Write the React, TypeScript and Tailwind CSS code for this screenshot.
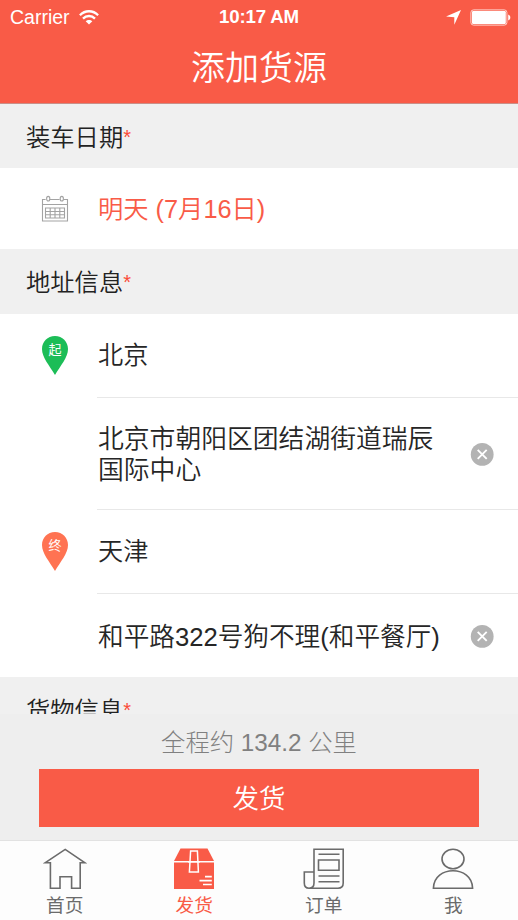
import type { ReactNode } from "react";

function StatusBar() {
  return (
    <div className="grid h-[34px] grid-cols-3 items-center pr-[7px] pl-[10px] text-white">
      <div className="flex items-center gap-[9px]">
        <span className="text-[19.5px] leading-[34px]">Carrier</span>
        <svg width="20" height="15" viewBox="0 0 20 15" fill="none" stroke="currentColor" strokeWidth="2.3">
          <path d="M0.9 5.3C6-0.1 14-0.1 19.1 5.3" />
          <path d="M4 8.6C7.4 5.1 12.6 5.1 16 8.6" />
          <path d="M6.7 11.3C8.6 9.4 11.4 9.4 13.3 11.3L10 14.6Z" fill="currentColor" stroke="none" />
        </svg>
      </div>
      <span className="-ml-[3px] text-center text-[18.7px] leading-[34px] font-bold tracking-[-0.2px] whitespace-nowrap">10:17 AM</span>
      <div className="flex items-center justify-end gap-[9px]">
        <svg width="15" height="15" viewBox="0 0 15 15" fill="currentColor">
          <path d="M15 0L8.3 14.8V7.2L0 6.6Z" />
        </svg>
        <svg width="41" height="17" viewBox="0 0 41 17" fill="none">
          <rect x="0.9" y="0.9" width="36" height="15.2" rx="2.6" stroke="#ffd3cb" strokeWidth="1" />
          <rect x="2" y="2" width="33.8" height="13" rx="1.2" fill="#fff" />
          <path d="M38.2 5.5C41 6.6 41 10.4 38.2 11.5Z" fill="#fff" />
        </svg>
      </div>
    </div>
  );
}

function SectionTitle({ children, className = "h-[65px]" }: { children: ReactNode; className?: string }) {
  return (
    <h2 className={`flex shrink-0 items-start overflow-hidden bg-[#f0f0f0] pl-[26px] text-[24.3px] leading-[67px] [font-weight:350] text-[#222] ${className}`}>
      <span>{children}</span>
      <span className="text-[20px] leading-[66px] text-[#fb4b38]">*</span>
    </h2>
  );
}

function Row({ icon, children, className }: { icon?: ReactNode; children: ReactNode; className: string }) {
  return (
    <div className="flex shrink-0 bg-white">
      <div className="flex w-[97px] justify-center pl-[13px]">{icon}</div>
      <div className={`flex flex-1 items-center pl-px [font-weight:350] text-[#262626] ${className}`}>{children}</div>
    </div>
  );
}

function Pin({ label, color }: { label: string; color: string }) {
  return (
    <svg className="mt-[21px]" width="28" height="41" viewBox="0 0 28 41">
      <path d="M14 1C6.5 1 1 6.8 1 14C1 22.5 8.5 30.5 14 40C19.5 30.5 27 22.5 27 14C27 6.8 21.5 1 14 1Z" fill={color} />
      <text x="14" y="19" textAnchor="middle" fontSize="13" fontWeight="400" fill="#fff">{label}</text>
    </svg>
  );
}

function Calendar() {
  return (
    <svg className="mt-[27px]" width="28" height="27" viewBox="0 0 28 27" fill="none" stroke="#a3a3a3" strokeWidth="1.1">
      <path d="M4.6 4.5H1.5V26H26.5V4.5H22.4M18.6 4.5H8.4M1.5 9.5H26.5" />
      <ellipse cx="7.2" cy="3.7" rx="1.6" ry="2.3" />
      <ellipse cx="20.8" cy="3.7" rx="1.6" ry="2.3" />
      <path d="M4.5 13V23H23.5V13ZM4.5 16.5H23.5M4.5 19.8H23.5M9.2 13V23M14 13V23M18.8 13V23" />
    </svg>
  );
}

function Clear() {
  return (
    <button aria-label="清除" className="mr-[24px] ml-auto shrink-0">
      <svg className="block" width="24" height="24" viewBox="0 0 24 24">
        <circle cx="12.2" cy="12.4" r="11.4" fill="#b3b3b3" />
        <path d="M7.7 7.9L16.7 16.9M16.7 7.9L7.7 16.9" stroke="#fff" strokeWidth="1.9" />
      </svg>
    </button>
  );
}

function Tab({ label, active, children }: { label: string; active?: boolean; children: ReactNode }) {
  return (
    <button className={`flex flex-1 flex-col items-center pt-[6px] ${active ? "text-[#f95b47]" : "text-[#6b6b6b]"}`}>
      <svg width="44" height="44" viewBox="0 0 44 44" fill="none" stroke="currentColor" strokeWidth="1.6">{children}</svg>
      <span className="mt-[2px] text-[18.7px] leading-[25px] font-normal">{label}</span>
    </button>
  );
}

export default function App() {
  return (
    <div className="flex h-[920px] w-[518px] flex-col overflow-hidden bg-[#f0f0f0] [font-family:'Liberation_Sans','Noto_Sans_CJK_SC',sans-serif]">
      <header className="h-[104px] shrink-0 border-b border-[#c98f88] bg-[#f95b47]">
        <StatusBar />
        <h1 className="text-center text-[34px] leading-[69px] [font-weight:350] text-white">添加货源</h1>
      </header>

      <main className="flex h-[610px] shrink-0 flex-col overflow-hidden">
        <SectionTitle className="h-[64px]">装车日期</SectionTitle>
        <Row icon={<Calendar />} className="h-[81px]">
          <span className="pt-[2px] text-[25.3px] text-[#f95b47]">明天 (7月16日)</span>
        </Row>
        <SectionTitle>地址信息</SectionTitle>
        <Row icon={<Pin label="起" color="#1cbd57" />} className="h-[84px] border-b border-[#e8e8e8]">
          <span className="text-[25.2px]">北京</span>
        </Row>
        <Row className="h-[112px] border-b border-[#e8e8e8]">
          <p className="w-[350px] pt-[3px] text-[25.8px] leading-[31px]">北京市朝阳区团结湖街道瑞辰<br />国际中心</p>
          <Clear />
        </Row>
        <Row icon={<Pin label="终" color="#ff7352" />} className="h-[84px] border-b border-[#e8e8e8]">
          <span className="pt-px text-[25.2px]">天津</span>
        </Row>
        <Row className="h-[83px]">
          <span className="pt-[3px] text-[25.65px] whitespace-nowrap">和平路322号狗不理(和平餐厅)</span>
          <Clear />
        </Row>
        <SectionTitle className="h-[37px]">货物信息</SectionTitle>
      </main>

      <section className="flex h-[127px] shrink-0 flex-col border-b border-[#e2e2e2] bg-[#eeeeee] px-[39px]">
        <p className="h-[55px] text-center text-[24.3px] leading-[57px] font-light text-[#808080]">全程约 134.2 公里</p>
        <button className="h-[58px] bg-[#f95b47] text-[26.5px] leading-[60px] [font-weight:350] text-white">发货</button>
      </section>

      <nav className="flex flex-1 bg-[#fdfdfd]">
        <Tab label="首页">
          <path d="M2 15.8L22.2 2.4L42 15.8H37.2V41.3H28.6V29.8H17V41.3H7.4V15.8Z" />
        </Tab>
        <Tab label="发货" active>
          <g fill="currentColor" stroke="none">
            <path d="M8.5 1.5H35.5L42 14H2Z" />
            <path d="M2 15.6H42V42H2Z" />
          </g>
          <path d="M18.6 4H25.4L26.4 25H17.4Z" stroke="#fff" strokeWidth="1.5" />
          <path d="M16 14.8H28" stroke="#fff" strokeWidth="1.5" />
          <path d="M33 29.7H39.8M27.5 33.6H39.8M31 37.5H39.8" stroke="#fff" strokeWidth="1.7" />
        </Tab>
        <Tab label="订单">
          <path d="M12 36V2.3H41.2V36Q41.2 41.2 36 41.2H7Q2.3 41.2 2.3 36V25H12V36Q12 41.2 7 41.2M16.5 7.2H37.5M16.5 13H37V23.3H16.5ZM16.5 29H37.5M16.5 34.7H37.5" />
        </Tab>
        <Tab label="我">
          <ellipse cx="22" cy="12" rx="11" ry="9.8" />
          <path d="M2.4 41.2C2.8 18 41.2 18 41.6 41.2Z" />
        </Tab>
      </nav>
    </div>
  );
}
